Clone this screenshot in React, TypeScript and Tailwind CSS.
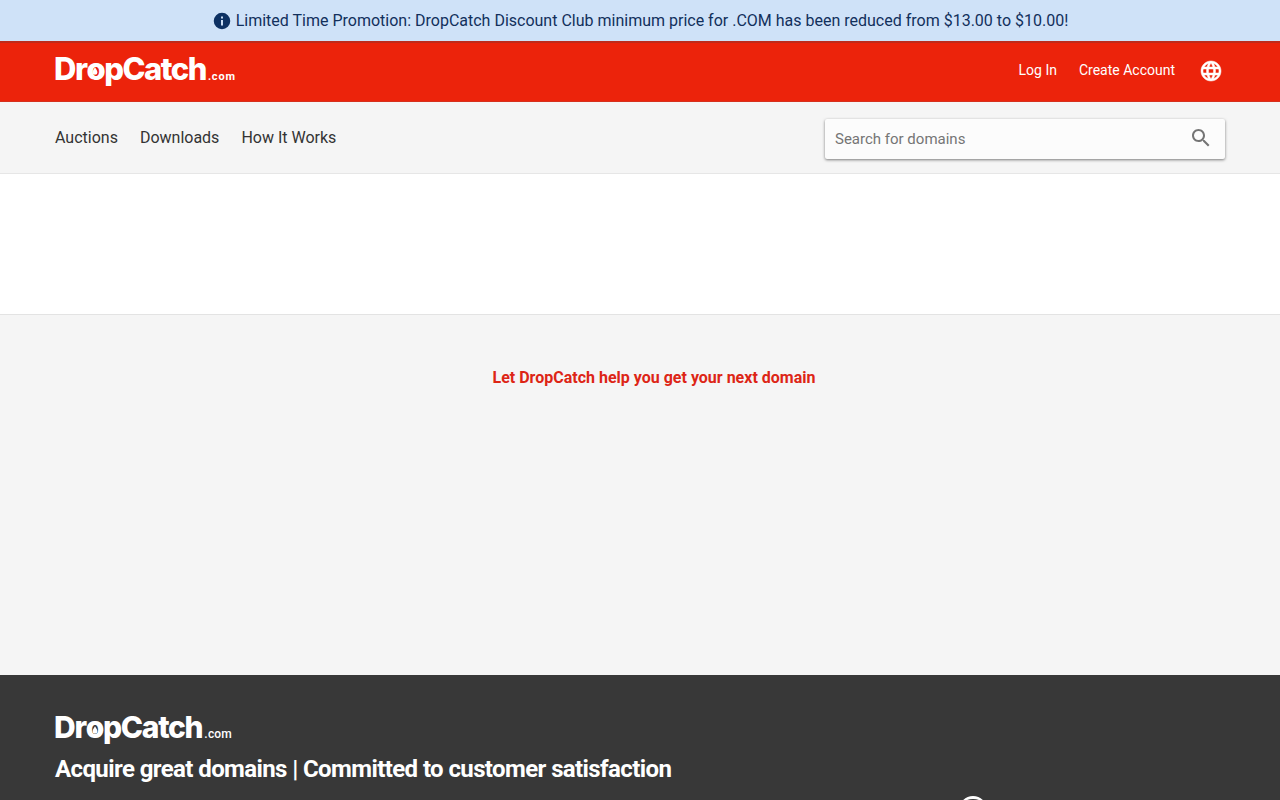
import React from "react";

const Logo = ({ small }: { small?: boolean }) => {
  return (
    <div className={small ? "flex items-baseline h-[32px] text-white" : "flex items-baseline h-[34px] text-white"}>
      <span className={small ? "font-['Inter',sans-serif] font-extrabold text-[30px] leading-[32px] tracking-[-1.3px]" : "font-['Inter',sans-serif] font-extrabold text-[31px] leading-[34px] tracking-[-1.5px]"}>
        Dr
        <span className="relative inline-block">
          o
          <svg viewBox="0 0 10 14" className="absolute left-[6px] top-[15px] w-[6px] h-[9px]">
            <path d="M5 0C6.500 3 9 5.500 9 8.500a4 4 0 0 1-8 0C1 5.500 3.500 3 5 0z" fill="currentColor" />
          </svg>
        </span>
        pCatch
      </span>
      <span className={small ? "font-['Roboto',sans-serif] font-medium text-[12px] tracking-[0.2px] ml-[2px]" : "font-['Roboto',sans-serif] font-bold text-[11px] tracking-[0.8px] ml-[2px]"}>.com</span>
    </div>
  );
};

const InfoIcon = () => (
  <svg viewBox="0 0 24 24" className="w-[18px] h-[18px] text-[#0d3163]">
    <path fill="currentColor" d="M12 1a11 11 0 1 0 0 22 11 11 0 0 0 0-22zm1.300 17h-2.600v-7.500h2.600V18zm0-9.500h-2.600V6h2.600v2.500z" />
  </svg>
);

const GlobeIcon = () => (
  <svg viewBox="0 0 24 24" className="w-[24px] h-[24px] block" fill="#fff" stroke="#fff" strokeWidth="0.5">
    <path d="M11.990 2C6.470 2 2 6.480 2 12s4.470 10 9.990 10C17.520 22 22 17.520 22 12S17.520 2 11.990 2zm6.930 6h-2.950c-.32-1.250-.78-2.450-1.380-3.560 1.840.63 3.370 1.910 4.330 3.560zM12 4.040c.83 1.200 1.480 2.530 1.910 3.960h-3.820c.43-1.430 1.080-2.760 1.910-3.960zM4.260 14C4.100 13.360 4 12.690 4 12s.1-1.360.26-2h3.380c-.08.66-.14 1.320-.14 2 0 .68.06 1.340.14 2H4.260zm.82 2h2.950c.32 1.250.78 2.450 1.380 3.560-1.840-.63-3.370-1.900-4.330-3.560zm2.950-8H5.080c.96-1.660 2.490-2.930 4.330-3.560C8.810 5.550 8.350 6.750 8.030 8zM12 19.960c-.83-1.200-1.480-2.530-1.910-3.960h3.820c-.43 1.430-1.080 2.760-1.910 3.960zM14.340 14H9.660c-.09-.66-.16-1.320-.16-2 0-.68.07-1.350.16-2h4.680c.09.650.16 1.320.16 2 0 .68-.07 1.340-.16 2zm.25 5.560c.6-1.110 1.060-2.310 1.380-3.560h2.950c-.96 1.650-2.490 2.930-4.330 3.560zM16.360 14c.08-.66.14-1.320.14-2 0-.68-.06-1.340-.14-2h3.380c.16.640.26 1.310.26 2s-.1 1.360-.26 2h-3.380z" />
  </svg>
);

const SearchIcon = () => (
  <svg viewBox="0 0 24 24" className="w-[24px] h-[24px] block -mt-[1px]" fill="#757575">
    <path d="M15.500 14h-.79l-.28-.27C15.410 12.590 16 11.110 16 9.500 16 5.910 13.090 3 9.500 3S3 5.910 3 9.500 5.910 16 9.500 16c1.610 0 3.090-.59 4.230-1.570l.27.28v.79l5 4.990L20.490 19l-4.990-5zm-6 0C7.010 14 5 11.990 5 9.500S7.010 5 9.500 5 14 7.010 14 9.500 11.990 14 9.500 14z" />
  </svg>
);

export default function App() {
  return (
    <div className="h-[800px] overflow-hidden flex flex-col font-['Roboto',sans-serif] bg-[#f5f5f5]">
      <div className="h-[41px] shrink-0 bg-[#cfe2f8] flex items-center justify-center gap-[5px] pl-[1px] text-[#12305c] text-[16px]">
        <InfoIcon />
        <span>Limited Time Promotion: DropCatch Discount Club minimum price for .COM has been reduced from $13.00 to $10.00!</span>
      </div>

      <header className="h-[61px] shrink-0 bg-[#ec230b] border-t-2 border-b border-t-[#c02a1b] border-b-[#d6301e] flex items-center justify-between pl-[54px] pr-[57px] text-white">
        <div className="-mt-[7px]">
          <Logo />
        </div>
        <div className="flex items-center text-[14px] h-[24px] -mt-[2px]">
          <a className="-mt-[1px]">Log In</a>
          <a className="ml-[22px] -mt-[1px]">Create Account</a>
          <span className="ml-[24px]">
            <GlobeIcon />
          </span>
        </div>
      </header>

      <nav className="h-[72px] shrink-0 bg-[#f5f5f5] border-b border-[#e6e6e6] flex items-center justify-between pl-[55px] pr-[55px]">
        <div className="flex gap-[22px] text-[16px] text-[#333333]">
          <a>Auctions</a>
          <a>Downloads</a>
          <a>How It Works</a>
        </div>
        <div className="w-[400px] h-[40px] mt-[2px] bg-[#fcfcfc] rounded-[2px] shadow-[0_1px_3px_rgba(0,0,0,0.5)] flex items-center justify-between pl-[10px] pr-[12px]">
          <span className="text-[15px] text-[#757575] mt-[1px]">Search for domains</span>
          <SearchIcon />
        </div>
      </nav>

      <div className="h-[141px] shrink-0 bg-white border-b border-[#e3e3e3]" />

      <main className="h-[360px] shrink-0 bg-[#f5f5f5] pt-[53px] pl-[28px] flex justify-center">
        <p className="text-[16px] leading-[19px] font-bold text-[#dd2516]">Let DropCatch help you get your next domain</p>
      </main>

      <footer className="relative flex-1 bg-[#383838] pl-[54px] pt-[36px] text-white overflow-hidden">
        <Logo small />
        <p className="mt-[10px] ml-[1px] text-[24px] leading-[32px] font-bold tracking-[-0.6px]">Acquire great domains | Committed to customer satisfaction</p>
        <div className="absolute left-[959px] top-[121px] w-[28px] h-[28px] rounded-full border-t-[3px] border-white" />
      </footer>
    </div>
  );
}
